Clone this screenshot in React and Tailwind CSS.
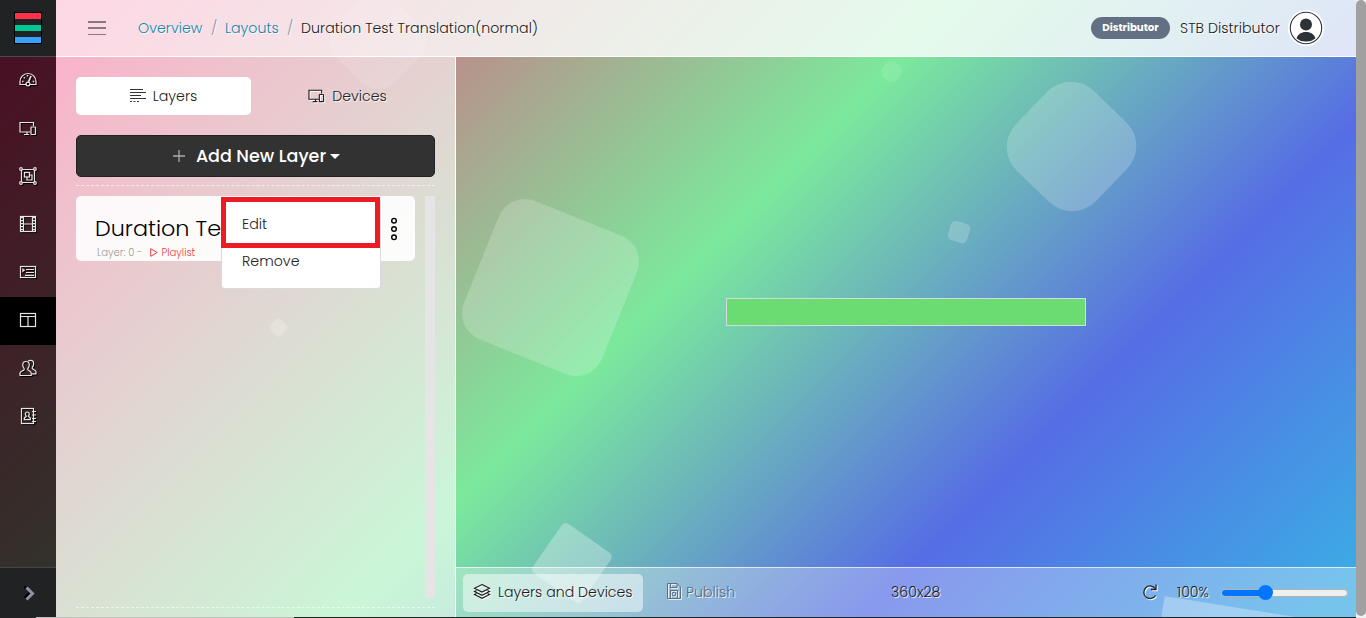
import React from 'react';

function Icon({ children, className = '', size = 18, sw = 1.2 }) {
  return (
    <svg width={size} height={size} viewBox="0 0 18 18" fill="none" stroke="currentColor" strokeWidth={sw} className={'shrink-0 ' + className}>
      {children}
    </svg>
  );
}

const Gauge = () => (
  <>
    <path d="M7 13.500H1v-3a8 8 0 0 1 16 0v3H11" />
    <circle cx="9" cy="13" r="1.900" />
    <path d="M9.500 11L12 5" strokeWidth="1.700" />
    <path d="M3 10.500h1.500M4.800 6.300l1 1M8.500 4v1.500M13.700 10.500h1.500" strokeWidth="1.500" />
  </>
);
const Screens = () => (
  <>
    <path d="M11.5 13H1V3.500h13.500V7" />
    <path d="M8 13v2.500M5 15.500h5" />
    <rect x="12" y="8" width="4.500" height="7.500" rx=".5" />
  </>
);
const Group = () => (
  <>
    <path d="M3 2.500h12M3 15.500h12M2.500 3v12M15.500 3v12" />
    <circle cx="2" cy="2" r="1.300" /><circle cx="16" cy="2" r="1.300" />
    <circle cx="2" cy="16" r="1.300" /><circle cx="16" cy="16" r="1.300" />
    <rect x="5.500" y="5.500" width="5" height="4.500" />
    <path d="M10.500 8h2.500v5H8v-3" />
  </>
);
const Film = () => (
  <>
    <rect x="1.500" y="1.500" width="15" height="15" />
    <path d="M4.500 1v16M13.500 1v16M4.500 9h9" />
    <path d="M3 2v15M15 2v15" strokeWidth="2" strokeDasharray="1.200 1.800" />
  </>
);
const ListBox = () => (
  <>
    <rect x="1.500" y="3.500" width="15" height="11" />
    <path d="M3.500 5.500l2.500 1.700-2.500 1.700z" fill="currentColor" strokeWidth=".4" />
    <path d="M7 6.500h8M7 9.500h8M6 12.300h9" />
  </>
);
const Columns = () => (
  <>
    <rect x="1.500" y="2.500" width="15" height="13" />
    <path d="M1.500 5.500h15M9 5.500v10" />
  </>
);
const Users = () => (
  <>
    <path d="M7 2.500c2 0 3.300 1.300 3.300 3.300 0 1.700-.7 2.800-1.500 3.700v1.300c.3.900 3.400 1.400 3.400 3.200v2.500H1v-2.500c0-1.800 3.800-2.300 4.100-3.200V9.500C4.400 8.600 3.700 7.500 3.700 5.800 3.700 3.800 5 2.500 7 2.500z" />
    <path d="M9.300 2.200C9.800 1.500 10.600 1.300 11.500 1.300c2 0 3.200 1.300 3.200 3.300 0 1.700-.6 2.600-1.400 3.500v1.400c.3.900 3.700 1.700 3.700 3.500v1.800h-4.500" />
  </>
);
const Contacts = () => (
  <>
    <rect x="2.500" y="1.500" width="12" height="15" />
    <path d="M13 4.500h4M13 8h4M13 11.500h4M13 14.500h4" strokeWidth="1.200" />
    <path d="M8.300 5c1.300 0 1.900.8 1.900 1.900 0 1-.4 1.700-.9 2.200.2 1 2 1.100 2 2.300v1.200H5.300v-1.200c0-1.200 1.900-1.300 2-2.300-.5-.5-.9-1.200-.9-2.200C6.400 5.800 7 5 8.300 5z" />
  </>
);

const NAV = [Gauge, Screens, Group, Film, ListBox, Columns, Users, Contacts];

const LIGHT = '[text-shadow:1px_1px_0px_#ffffffd0]';

function Sidebar() {
  return (
    <aside className="flex w-14 shrink-0 flex-col bg-black/70">
      <div className="flex h-[57px] items-center justify-center border-b border-[#4a4b4c] bg-[#212224]">
        <div className="flex h-8 w-7 flex-col justify-between border border-black bg-[#212224]">
          <div className="h-1.5 bg-[#ff3049]" />
          <div className="h-1.5 bg-[#00c896]" />
          <div className="h-1.5 bg-[#38a0ff]" />
        </div>
      </div>
      <nav className="flex flex-1 flex-col">
        {NAV.map((Glyph, i) => (
          <div key={i} className={'flex h-12 items-center justify-center pb-0.5 text-[#e8e4e6] ' + (i === 5 ? 'bg-black' : '')}>
            <Icon className="drop-shadow-[1px_1px_0px_#000000]"><Glyph /></Icon>
          </div>
        ))}
      </nav>
      <div className="flex h-[50px] items-center justify-center border-t border-[#454546] bg-[#212224] pl-1">
        <svg width="14" height="18" viewBox="0 0 14 18" fill="none">
          <path d="M1.500 2.500l2 2M2 14l5-5" stroke="#000" strokeWidth="3" />
          <path d="M3.500 3.500L9.500 9.500l-6 6" stroke="#8d93a5" strokeWidth="3" />
        </svg>
      </div>
    </aside>
  );
}

function Header() {
  return (
    <header className="flex h-[57px] shrink-0 items-center border-b border-white bg-white/80 pl-8 pr-[34px]">
      <div className="flex h-[14px] w-[18px] flex-col justify-between">
        <div className="h-[1.500px] bg-[#8b7782]" />
        <div className="h-[1.500px] bg-[#8b7782]" />
        <div className="h-[1.500px] bg-[#8b7782]" />
      </div>
      <div className={'ml-8 flex flex-1 whitespace-nowrap text-[14.220px] leading-5 ' + LIGHT}>
        <span className="w-[73px] text-[#0f86ae]">Overview</span>
        <span className="w-[14px] text-[#8b93a0]">/</span>
        <span className="w-[62px] text-[#0f86ae]">Layouts</span>
        <span className="w-[14px] text-[#8b93a0]">/</span>
        <span className="text-[#1c1c1c]">Duration Test Translation(normal)</span>
      </div>
      <div className="flex h-[22px] w-[79px] items-center justify-center rounded-full bg-[#636f83] text-[10.200px] font-bold text-white">Distributor</div>
      <div className={'ml-2.5 w-[108px] whitespace-nowrap pt-px text-[14.220px] text-[#1c1c1c] ' + LIGHT}>STB Distributor</div>
      <svg width="36" height="36" viewBox="0 0 36 36" className="-mr-0.5 shrink-0">
        <circle cx="18" cy="18" r="18" fill="#fff" />
        <circle cx="18" cy="18" r="15.700" fill="none" stroke="#2d3237" strokeWidth="1.100" />
        <circle cx="18" cy="14.500" r="6" fill="#2d3237" />
        <path d="M8.600 28.500C9.500 24.500 13 22 18 22s8.500 2.500 9.400 6.500A14 14 0 0 1 18 31.600a14 14 0 0 1-9.400-3.100z" fill="#2d3237" />
      </svg>
    </header>
  );
}

function LayerPanel() {
  return (
    <section className="flex w-[400px] shrink-0 flex-col border-r border-white bg-white/60 px-5 pt-5">
      <div className="flex h-[38px] shrink-0 gap-[9px] text-[14.220px] text-[#222]">
        <div className="flex w-[175px] items-center justify-center gap-[7px] rounded-[5px] bg-white">
          <svg width="16" height="14" viewBox="0 0 16 14" stroke="#333" fill="none">
            <path d="M0 .5h13M0 3.500h16M0 6.500h11M0 9.500h16" />
            <path d="M0 12.500h9" strokeDasharray="2 1.500" />
          </svg>
          <span className="pt-px">Layers</span>
        </div>
        <div className={'flex w-[175px] items-center justify-center gap-[7px] ' + LIGHT}>
          <Icon size={17} className="-mt-px drop-shadow-[1px_1px_0px_#ffffff]"><Screens /></Icon>
          <span className="pt-px">Devices</span>
        </div>
      </div>
      <div className="mt-5 flex h-[42px] shrink-0 items-center justify-center rounded-[5px] border border-[#1f2123] bg-[#323232] pl-0.5 text-[17.500px] font-medium text-white">
        <svg width="12" height="12" viewBox="0 0 12 12" className="mr-[11px]"><path d="M6 0v12M0 6h12" stroke="#aaa" strokeWidth="1.300" /></svg>
        <span className="whitespace-nowrap pt-px">Add New Layer</span>
        <svg width="10" height="5" viewBox="0 0 10 5" className="ml-1"><path d="M0 0h10L5 5z" fill="#fff" /></svg>
      </div>
      <div className="mt-2 border-t border-dashed border-white/60" />
      <div className="mt-2.5 flex h-[402px] shrink-0 justify-between">
        <div className="relative h-[65px] w-[339px] rounded-[5px] bg-white/90">
          <div className="flex flex-col pl-[19px] pt-[18px]">
            <div className="whitespace-nowrap text-[22.300px] font-light leading-[29px] text-black">Duration Te</div>
            <div className="flex items-center pl-0.5 pt-[2px] text-[10.100px] leading-[15px]">
              <span className="w-[52.500px] text-[#999]">Layer: 0 -</span>
              <svg width="8" height="9" viewBox="0 0 8 9" className="mr-1"><path d="M.7.7l6.500 3.800L.7 8.300z" fill="none" stroke="#ec3a43" /></svg>
              <span className="text-[#ec3a43]">Playlist</span>
            </div>
          </div>
          <svg width="8" height="24" viewBox="0 0 8 24" className="absolute left-[314px] top-[21px]" fill="none" stroke="#000" strokeWidth="1.400">
            <circle cx="4" cy="3.700" r="2.300" /><circle cx="4" cy="12" r="2.300" /><circle cx="4" cy="20.300" r="2.300" />
          </svg>
          <div className="absolute left-[145px] top-px h-[91.500px] w-[160px] rounded-[4px] border border-[#d8dbe0] bg-white text-[14.220px] text-[#222]">
            <div className="-ml-px -mt-px flex h-[51px] w-[159px] items-center border-[5px] border-[#ed1c24] pl-4 pt-1">Edit</div>
            <div className="pl-5 pt-[3px] leading-5">Remove</div>
          </div>
        </div>
        <div className="w-2.5 bg-[#e5e5e5]" />
      </div>
      <div className="mt-[9px] border-t border-dashed border-white/60" />
    </section>
  );
}

function Toolbar() {
  return (
    <footer className={'flex h-[50px] shrink-0 items-center border-t border-white/70 bg-white/30 pl-[7px] text-[14.150px] text-[#1c1c1c] ' + LIGHT}>
      <div className="flex h-[38px] w-[180px] items-center gap-[7px] rounded-[5px] bg-white/50 pl-[10px]">
        <Icon sw={1.1} className="-mt-px drop-shadow-[1px_1px_0px_#ffffff]">
          <path d="M9 1.500l7.500 3.800L9 9.100 1.500 5.300z" />
          <path d="M3.500 7.500l-2 1L9 12.300l7.500-3.800-2-1M3.500 10.500l-2 1L9 15.300l7.500-3.800-2-1" />
        </Icon>
        <span className="whitespace-nowrap">Layers and Devices</span>
      </div>
      <div className="ml-[22px] flex w-[226px] items-center gap-[3px] text-[#5e6e82]">
        <Icon sw={1} className="-mt-0.5 drop-shadow-[1px_1px_0px_#ffffffc0]">
          <path d="M2.500 1.500h9.500L15.500 5v11.500h-13z" />
          <path d="M5.500 1.500v4H12v-4M5.500 16.500v-8h7v8" />
          <circle cx="9" cy="12" r="1.800" />
        </Icon>
        <span>Publish</span>
      </div>
      <div className="w-[251px]">360x28</div>
      <svg width="16" height="18" viewBox="0 0 16 18" className="-mt-0.5 drop-shadow-[1px_1px_0px_#ffffff]" fill="none" stroke="#222" strokeWidth="1.300">
        <path d="M14 1.500v5H9" />
        <path d="M13.500 6A6.300 6.300 0 1 0 13.500 12.500" />
      </svg>
      <div className="ml-[19px] w-[43.500px]">100%</div>
      <div className="relative flex h-4 w-[127px] items-center">
        <div className="h-2 w-full overflow-hidden rounded-full border border-[#b2b2b2] bg-[#efefef]">
          <div className="h-full w-[45px] bg-[#0075ff]" />
        </div>
        <div className="absolute left-[37.500px] top-0 size-[15px] rounded-full bg-[#0075ff]" />
      </div>
    </footer>
  );
}

function Backdrop() {
  return (
    <div className="absolute inset-0 overflow-hidden bg-[linear-gradient(135deg,#ff2d78_0px,#7be99c_679px,#566de5_1045px,#3cabe4_1365px)]">
      <div className="absolute left-[475.500px] top-[212.500px] size-[149px] rotate-[22deg] rounded-[28px] bg-white/20" />
      <div className="absolute left-[1016px] top-[91px] size-[111px] rotate-[44deg] rounded-[33px] bg-white/20" />
      <div className="absolute left-[949px] top-[222px] size-5 rotate-[18deg] rounded-[5px] bg-white/20" />
      <div className="absolute left-[881.500px] top-[62px] size-[19px] rotate-45 rounded-[7px] bg-white/10" />
      <div className="absolute left-[542px] top-[533px] size-[60px] rotate-[35deg] rounded-[5px] bg-white/30" />
      <div className="absolute left-[1152px] top-[607px] size-[150px] rotate-[9deg] rounded-[1px] bg-white/30" />
      <div className="absolute left-[270.500px] top-[319.500px] size-[15px] rotate-[42deg] rounded-[4px] bg-white/20" />
      <div className="absolute left-[337px] top-[0px] size-[82px] rotate-45 rounded-[24px] bg-white/10" />
    </div>
  );
}

export default function App() {
  return (
    <div className="relative flex h-[618px] w-[1366px] overflow-hidden bg-[#f1f1f1] font-['Poppins','Inter',sans-serif] font-light">
      <div className="relative h-[618px] w-[1356px] shrink-0 overflow-hidden">
        <Backdrop />
        <div className="relative flex h-[617px]">
          <Sidebar />
          <div className="flex min-w-0 flex-1 flex-col">
            <Header />
            <div className="flex min-h-0 flex-1">
              <LayerPanel />
              <main className="flex min-w-0 flex-1 flex-col">
                <div className="flex flex-1 items-center justify-center">
                  <div className="h-7 w-[360px] border border-[#d5d9e0] bg-[#6bdc72]" />
                </div>
                <Toolbar />
              </main>
            </div>
          </div>
        </div>
        <div className="relative flex h-px bg-[#222]">
          <div className="ml-9 w-[258px] bg-[#c4c0c2]" />
        </div>
      </div>
      <div className="h-[616px] w-2.5 rounded-[5px] bg-[#a0a0a0]" />
    </div>
  );
}
